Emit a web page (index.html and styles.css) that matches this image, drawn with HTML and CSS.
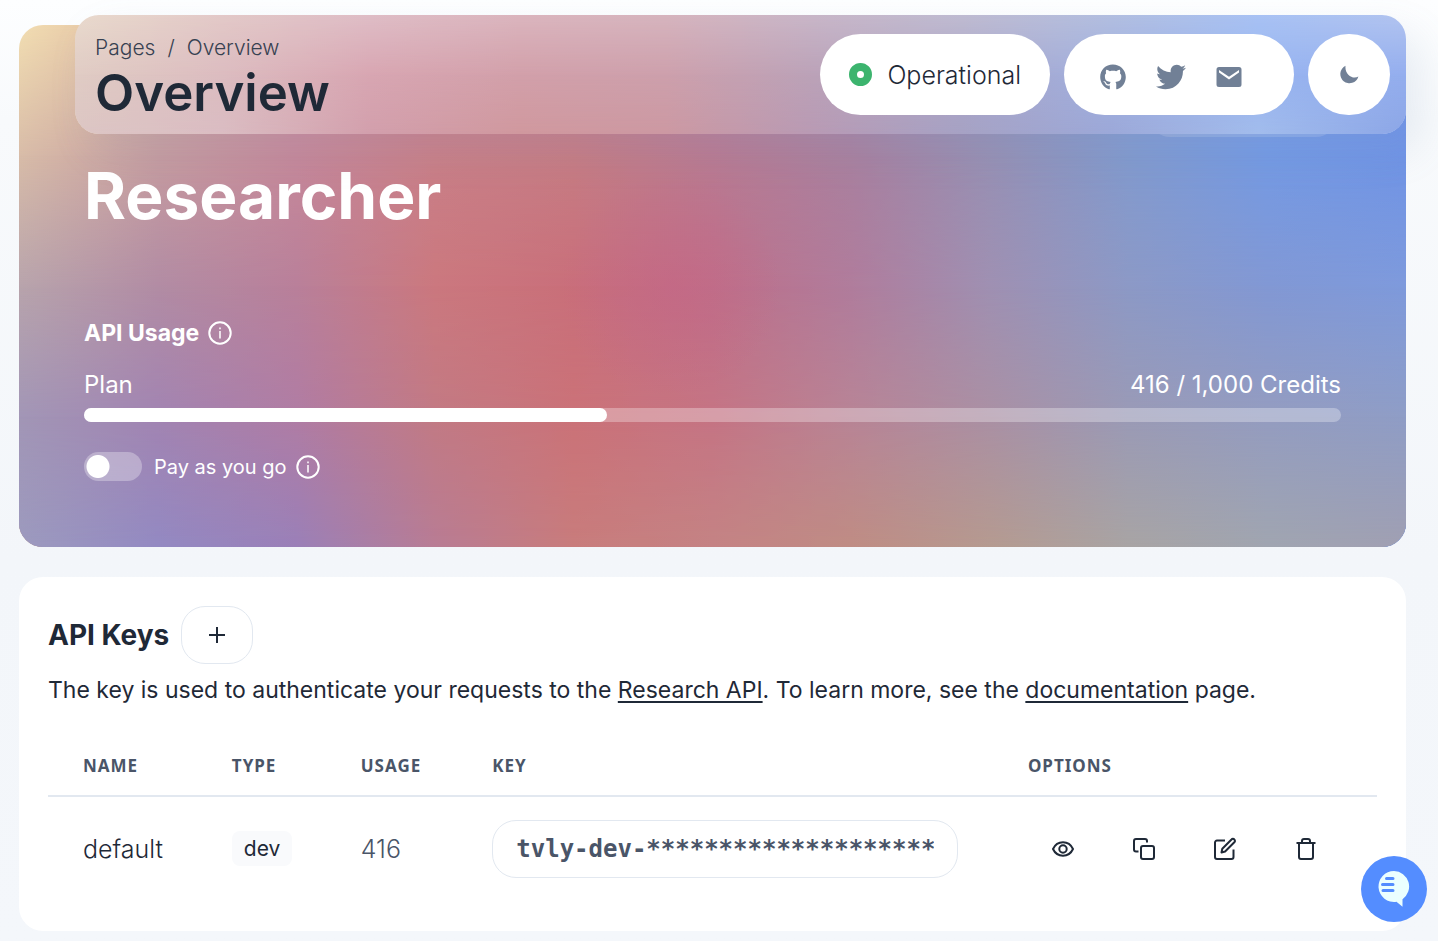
FILE: index.html
```html
<!DOCTYPE html>
<html lang="en">
<head>
<meta charset="utf-8">
<meta name="viewport" content="width=device-width, initial-scale=1">
<title>Overview</title>
<link rel="stylesheet" href="styles.css">
</head>
<body>
<header class="navbar">
  <div class="heading">
    <nav class="crumbs" aria-label="Breadcrumb"><a href="#">Pages</a><span>/</span><a href="#">Overview</a></nav>
    <h1>Overview</h1>
  </div>
  <div class="nav-tools">
    <a class="pill status" href="#"><span class="status-dot"></span>Operational</a>
    <div class="pill social">
      <a href="#" aria-label="GitHub"><svg width="26" height="26" viewBox="0 0 496 504" fill="currentColor"><path d="M165.9 397.4c0 2-2.3 3.6-5.2 3.6-3.3.3-5.6-1.3-5.6-3.6 0-2 2.3-3.6 5.2-3.6 3-.3 5.6 1.3 5.6 3.6zm-31.1-4.5c-.7 2 1.3 4.3 4.3 4.9 2.6 1 5.6 0 6.2-2s-1.3-4.3-4.3-5.2c-2.6-.7-5.5.3-6.2 2.3zm44.2-1.7c-2.9.7-4.9 2.6-4.6 4.9.3 2 2.9 3.3 5.9 2.6 2.9-.7 4.9-2.6 4.6-4.6-.3-1.9-3-3.2-5.9-2.9zM244.8 8C106.1 8 0 113.3 0 252c0 110.9 69.8 205.8 169.5 239.2 12.8 2.3 17.3-5.6 17.3-12.1 0-6.2-.3-40.4-.3-61.4 0 0-70 15-84.7-29.8 0 0-11.4-29.1-27.8-36.6 0 0-22.9-15.7 1.6-15.4 0 0 24.9 2 38.6 25.8 21.9 38.6 58.6 27.5 72.9 20.9 2.3-16 8.8-27.1 16-33.7-55.9-6.2-112.3-14.3-112.3-110.5 0-27.5 7.6-41.3 23.6-58.9-2.6-6.5-11.1-33.3 2.6-67.9 20.9-6.5 69 27 69 27 20-5.6 41.5-8.5 62.8-8.5s42.8 2.9 62.8 8.5c0 0 48.1-33.6 69-27 13.7 34.7 5.2 61.4 2.6 67.9 16 17.7 25.8 31.5 25.8 58.9 0 96.5-58.9 104.2-114.8 110.5 9.2 7.9 17 22.9 17 46.4 0 33.7-.3 75.4-.3 83.6 0 6.5 4.6 14.4 17.3 12.1C428.2 457.8 496 362.9 496 252 496 113.3 383.5 8 244.8 8z"/></svg></a>
      <a href="#" aria-label="Twitter"><svg width="30" height="30" viewBox="0 0 512 512" fill="currentColor"><path d="M459.37 151.716c.325 4.548.325 9.097.325 13.645 0 138.72-105.583 298.558-298.558 298.558-59.452 0-114.68-17.219-161.137-47.106 8.447.974 16.568 1.299 25.34 1.299 49.055 0 94.213-16.568 130.274-44.832-46.132-.975-84.792-31.188-98.112-72.772 6.498.974 12.995 1.624 19.818 1.624 9.421 0 18.843-1.3 27.614-3.573-48.081-9.747-84.143-51.98-84.143-102.985v-1.299c13.969 7.797 30.214 12.67 47.431 13.319-28.264-18.843-46.781-51.005-46.781-87.391 0-19.492 5.197-37.36 14.294-52.954 51.655 63.675 129.3 105.258 216.365 109.807-1.624-7.797-2.599-15.918-2.599-24.04 0-57.828 46.782-104.934 104.934-104.934 30.213 0 57.502 12.67 76.67 33.137 23.715-4.548 46.456-13.32 66.599-25.34-7.798 24.366-24.366 44.833-46.132 57.827 21.117-2.273 41.584-8.122 60.426-16.243-14.292 20.791-32.161 39.308-52.628 54.253z"/></svg></a>
      <a href="#" aria-label="Email"><svg width="26" height="22" viewBox="0 0 26 22" fill="currentColor"><path fill-rule="evenodd" d="M3 1h20a2.500 2.500 0 0 1 2.500 2.500v15a2.500 2.500 0 0 1-2.500 2.500H3a2.500 2.500 0 0 1-2.500-2.500v-15A2.500 2.500 0 0 1 3 1zM3 4v2.500l10 7 10-7V4l-10 6.800z"/></svg></a>
    </div>
    <button class="pill theme" type="button" aria-label="Dark mode"><svg width="20" height="20" viewBox="0 0 20 20" fill="currentColor"><path d="M6.500.8A9.200 9.200 0 1 0 19.400 11.500C14 15 5.500 9.500 6.500.8z"/></svg></button>
  </div>
</header>

<main>
  <section class="hero">
    <div class="mesh" aria-hidden="true"><i class="m0"></i><i class="m1"></i><i class="m2"></i><i class="m3"></i><i class="m4"></i><i class="glow"></i><i class="tab"></i></div>
    <h2>Researcher</h2>
    <div class="usage">
      <h3>API Usage <svg class="info" width="24" height="24" viewBox="0 0 24 24" fill="none" stroke="currentColor" stroke-width="2"><circle cx="12" cy="12" r="10.700"/><path stroke-width="1.500" d="M12 10v7.500M12 6.500v1.800"/></svg></h3>
      <div class="meter-label"><span>Plan</span><span>416 / 1,000 Credits</span></div>
      <div class="meter" role="progressbar" aria-label="Plan" aria-valuemin="0" aria-valuemax="1000" aria-valuenow="416"><span style="width:41.6%"></span></div>
      <div class="payg">
        <input type="checkbox" id="payg" class="toggle"><label for="payg">Pay as you go</label>
        <svg class="info" width="24" height="24" viewBox="0 0 24 24" fill="none" stroke="currentColor" stroke-width="2"><circle cx="12" cy="12" r="10.700"/><path stroke-width="1.500" d="M12 10v7.500M12 6.500v1.800"/></svg>
      </div>
    </div>
  </section>

  <section class="keys">
    <div class="keys-head">
      <h2>API Keys</h2>
      <button class="add" type="button" aria-label="Add key"><svg width="18" height="18" viewBox="0 0 18 18" fill="none" stroke="currentColor" stroke-width="2"><path d="M9 1v16M1 9h16"/></svg></button>
    </div>
    <p>The key is used to authenticate your requests to the <a href="#">Research API</a>. To learn more, see the <a href="#">documentation</a> page.</p>
    <table>
      <thead><tr><th class="c-name">Name</th><th class="c-type">Type</th><th class="c-usage">Usage</th><th class="c-key">Key</th><th class="c-options">Options</th></tr></thead>
      <tbody><tr>
        <td>default</td>
        <td><span class="tag">dev</span></td>
        <td class="count">416</td>
        <td><input class="key" type="text" readonly aria-label="API key" value="tvly-dev-********************"></td>
        <td><div class="options">
          <button type="button" aria-label="Show key"><svg width="24" height="24" viewBox="0 0 24 24"><path d="M2 12c2-4.300 5.500-6.700 10-6.700S20 7.700 22 12c-2 4.300-5.500 6.700-10 6.700S4 16.300 2 12z"/><circle cx="12" cy="12" r="3.700"/></svg></button>
          <button type="button" aria-label="Copy key"><svg width="24" height="24" viewBox="0 0 24 24"><rect x="9" y="9" width="13" height="13" rx="2"/><path d="M6.500 14.500H4a2 2 0 0 1-2-2V4a2 2 0 0 1 2-2h9a2 2 0 0 1 2 2v1.500"/></svg></button>
          <button type="button" aria-label="Edit key"><svg width="24" height="24" viewBox="0 0 24 24"><path d="M12 3.500H4a2 2 0 0 0-2 2V20a2 2 0 0 0 2 2h14.500a2 2 0 0 0 2-2v-7.500"/><path d="M8.500 15.500l.8-3.800 9.200-9.200a1.800 1.800 0 0 1 2.800 0 1.800 1.800 0 0 1 0 2.800l-9.200 9.200z"/></svg></button>
          <button type="button" aria-label="Delete key"><svg width="24" height="24" viewBox="0 0 24 24"><path d="M2.500 6h19M5 6v14a2 2 0 0 0 2 2h10a2 2 0 0 0 2-2V6M8 6V4a2 2 0 0 1 2-2h4a2 2 0 0 1 2 2v2"/></svg></button>
        </div></td>
      </tr></tbody>
    </table>
  </section>
</main>

<button class="chat" type="button" aria-label="Open chat"><svg width="34" height="38" viewBox="0 0 34 38"><path fill="#ebffff" d="M17 1a15.500 15.500 0 1 0 2.500 30.800l6 5v-7.600A15.500 15.500 0 0 0 17 1z"/><path stroke="#548dff" stroke-width="3" stroke-linecap="round" d="M9.500 8.500H16M5.500 14.500H16M6 20.500h10"/></svg></button>
</body>
</html>
```

FILE: styles.css
```css
* { box-sizing: border-box; }

body {
  margin: 0;
  padding: 25px 32px 11px 19px;
  background: linear-gradient(#fdfeff, #f8fafc 120px, #f3f6fa 560px, #f4f7fb);
  color: #1f2937;
  font-family: Inter, "Liberation Sans", sans-serif;
  font-size: 24px;
}

h1, h2, h3, p { margin: 0; }
a { color: inherit; }
button { font: inherit; color: inherit; cursor: pointer; }
svg { display: block; flex: none; }

/* The bar's frosted look is painted as three colour bands, top to bottom. */
.navbar {
  position: absolute;
  z-index: 2;
  top: 15px;
  left: 75px;
  right: 32px;
  display: flex;
  justify-content: space-between;
  align-items: flex-start;
  padding: 19px 16px 10px 20px;
  border-radius: 24px;
  background: linear-gradient(90deg, #e9dacd, #e3c9c8, #dfbdc6, #dbb5be, #d6b4be, #c8b6c8, #bfbbd1, #b2bee0, #a8c2f4, #b2c4f0);
  box-shadow: 14px 18px 40px rgba(112, 144, 176, 0.14);
}
.navbar::before, .navbar::after { content: ""; position: absolute; z-index: -1; inset: 0; border-radius: inherit; }
.navbar::before {
  background: linear-gradient(90deg, #e0ccc4, #dcbcc0, #d8a6b2, #d2a0aa, #cda0ac, #bba2b8, #aba6c8, #a0b0e0, #98b4f0, #94aeee);
  mask-image: linear-gradient(transparent, #000 50%);
}
.navbar::after {
  background: linear-gradient(90deg, #dcc6c4, #dabcc2, #d29fac, #d0989e, #cc98a2, #b89ab4, #a6a2c4, #9ca8d8, #a2bcec, #8ca6e6);
  mask-image: linear-gradient(transparent 50%, #000);
}
.crumbs { display: flex; gap: 12px; font-size: 21px; line-height: 28px; font-weight: 300; color: #374151; }
.crumbs a { text-decoration: none; }
.heading h1 { font-size: 51px; line-height: 62px; font-weight: 600; }

.nav-tools { display: flex; gap: 14px; }
.pill {
  display: flex;
  align-items: center;
  height: 81px;
  border: 0;
  border-radius: 41px;
  background: #fff;
}
.status { gap: 15px; padding: 0 29px; text-decoration: none; font-size: 25px; font-weight: 300; }
.status-dot { width: 23px; height: 23px; border: 8px solid #3cb46e; border-radius: 50%; }
.social { gap: 30px; padding: 5px 52px 0 36px; color: #718096; }
.theme { justify-content: center; width: 82px; padding: 0; color: #718096; }

.hero {
  position: relative;
  overflow: hidden;
  padding: 127px 65px 66px;
  border-radius: 24px;
  color: #fff;
}
.hero h2, .usage { position: relative; }
.hero h2 { font-size: 64px; line-height: 88px; font-weight: 700; }
.usage { margin-top: 75px; }
.usage h3 { display: flex; align-items: center; gap: 9px; font-size: 23px; line-height: 36px; font-weight: 700; }
.meter-label { display: flex; justify-content: space-between; margin-top: 16px; line-height: 36px; }
.meter { height: 14px; margin-top: 5px; border-radius: 7px; background: rgba(255, 255, 255, 0.3); }
.meter span { display: block; height: 100%; border-radius: 7px; background: #fff; }
.payg { display: flex; align-items: center; height: 29px; margin-top: 30px; font-size: 20px; }
.payg label { margin: 0 9px 0 12px; }
.toggle {
  appearance: none;
  width: 58px;
  height: 29px;
  margin: 0;
  border-radius: 15px;
  background: radial-gradient(circle at 14px 50%, #fff 11px, rgba(255, 255, 255, 0.3) 12px);
}

/* Mesh gradient: horizontal colour bands, each fading into the next one down. */
.mesh, .mesh i { position: absolute; inset: 0; }
.m0 { background: linear-gradient(90deg, #f2deb2, #e0b8a0, #d898a4, #cf8898, #c8849c, #b890a8, #a898b8, #9098c8, #8aa0e0, #80a4f0, #7898f0); }
.m1 { background: linear-gradient(90deg, #d8bca8, #c69ca0, #c6889a, #c97f88, #c67c84, #b97a92, #a9809f, #9790b4, #829ace, #749ae4, #7094e6); mask-image: linear-gradient(transparent, #000 25%); }
.m2 { background: linear-gradient(90deg, #b8a4ac, #b28ca4, #b9809a, #cb787e, #c96f7a, #be7089, #b07c9c, #9f90b2, #8c99c6, #8298d4, #7e9adc); mask-image: linear-gradient(transparent 25%, #000 50%); }
.m3 { background: linear-gradient(90deg, #a296b6, #a284b2, #b07ca4, #c27a84, #cb7278, #c57484, #b88496, #aa90a4, #9a9ab6, #949cc0, #8f9dc6); mask-image: linear-gradient(transparent 50%, #000 75%); }
.m4 { background: linear-gradient(90deg, #9c9abe, #9389c2, #9a80b8, #b87c94, #c87c7c, #c48384, #bf8c84, #b59a90, #a8a4a4, #a0a5b0, #a09fb2); mask-image: linear-gradient(transparent 75%, #000); }
.glow { background: radial-gradient(circle at 47% 50%, rgba(198, 100, 134, 0.5), rgba(198, 100, 134, 0) 110px); }
.mesh .tab { inset: 50px 70px auto auto; width: 186px; height: 62px; border-radius: 20px; background: rgba(255, 255, 255, 0.14); }

.keys { margin-top: 30px; padding: 29px 29px 31px; border-radius: 24px; background: #fff; }
.keys-head { display: flex; align-items: center; gap: 12px; }
.keys-head h2 { font-size: 28px; line-height: 40px; font-weight: 700; }
.add {
  display: grid;
  place-items: center;
  width: 72px;
  height: 58px;
  border: 1px solid #e2e8f0;
  border-radius: 24px;
  background: #fff;
}
.keys p { margin-top: 8px; font-size: 23px; line-height: 36px; }
.keys p a { text-decoration-thickness: 2px; text-underline-offset: 3px; }

table { width: 100%; margin-top: 28px; border-collapse: collapse; table-layout: fixed; text-align: left; }
th, td { padding: 0 35px; }
th {
  height: 60px;
  border-bottom: 2px solid #e2e8f0;
  color: #4a5568;
  font: 700 17px "Noto Sans", sans-serif;
  letter-spacing: 1px;
  text-transform: uppercase;
}
td { height: 104px; font-size: 25px; font-weight: 300; white-space: nowrap; }
.c-name { width: 11.2%; }
.c-type { width: 9.7%; }
.c-usage { width: 9.9%; }
.c-key { width: 40.3%; }
.tag { display: inline-block; padding: 0 12px; border-radius: 8px; background: #f9fafc; font-size: 21px; line-height: 35px; font-weight: 400; }
.count { color: #4a5568; }
.key {
  display: block;
  width: 100%;
  height: 58px;
  padding: 0 23px;
  border: 1px solid #e2e8f0;
  border-radius: 24px;
  background: #fff;
  color: #4a5568;
  font: 700 24px "DejaVu Sans Mono", monospace;
}
.options { display: flex; gap: 11px; }
.options button { display: grid; place-items: center; width: 70px; height: 58px; padding: 0; border: 0; background: none; }
.options svg { fill: none; stroke: currentColor; stroke-width: 2; stroke-linejoin: round; }

.chat {
  position: fixed;
  right: 11px;
  bottom: 19px;
  display: grid;
  place-items: center;
  width: 66px;
  height: 66px;
  padding: 0;
  border: 0;
  border-radius: 50%;
  background: #548dff;
}
```
